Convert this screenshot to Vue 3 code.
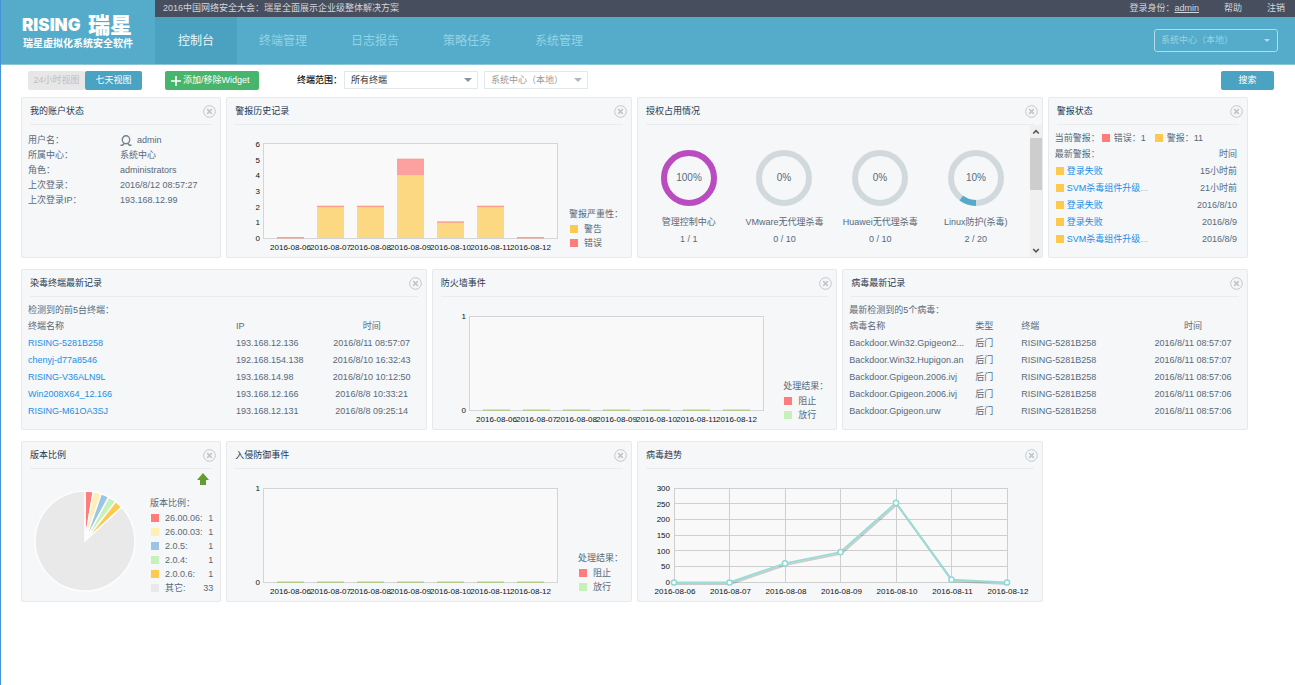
<script setup>
import { ref } from 'vue'

const tabs = ['控制台', '终端管理', '日志报告', '策略任务', '系统管理']
const activeTab = ref('控制台')

const dates = ['06', '07', '08', '09', '10', '11', '12'].map((d) => `2016-08-${d}`)

const account = [
  ['用户名：', 'admin'],
  ['所属中心：', '系统中心'],
  ['角色：', 'administrators'],
  ['上次登录：', '2016/8/12 08:57:27'],
  ['上次登录IP：', '193.168.12.99']
]

const plot = { left: 37, top: 19, width: 294, height: 94 }
const unit = plot.height / 6
const bars = [
  { warn: 0, error: 0 },
  { warn: 2, error: 0 },
  { warn: 2, error: 0 },
  { warn: 4, error: 1 },
  { warn: 1, error: 0 },
  { warn: 2, error: 0 },
  { warn: 0, error: 0 }
].map((b, i) => ({
  x: 50 + i * 40,
  warnY: 113 - b.warn * unit,
  warnH: b.warn * unit,
  errY: 113 - (b.warn + b.error) * unit,
  errH: b.error * unit
}))

const licenses = [
  { name: '管理控制中心', percent: 100, used: '1 / 1', color: '#bb4bc0' },
  { name: 'VMware无代理杀毒', percent: 0, used: '0 / 10', color: '#55aac9' },
  { name: 'Huawei无代理杀毒', percent: 0, used: '0 / 10', color: '#55aac9' },
  { name: 'Linux防护(杀毒)', percent: 10, used: '2 / 20', color: '#55aac9' }
]
const ring = 2 * Math.PI * 25

const alerts = [
  { text: '登录失败', more: false, time: '15小时前' },
  { text: 'SVM杀毒组件升级', more: true, time: '21小时前' },
  { text: '登录失败', more: false, time: '2016/8/10' },
  { text: '登录失败', more: false, time: '2016/8/9' },
  { text: 'SVM杀毒组件升级', more: true, time: '2016/8/9' }
]

const infected = [
  ['RISING-5281B258', '193.168.12.136', '2016/8/11 08:57:07'],
  ['chenyj-d77a8546', '192.168.154.138', '2016/8/10 16:32:43'],
  ['RISING-V36ALN9L', '193.168.14.98', '2016/8/10 10:12:50'],
  ['Win2008X64_12.166', '193.168.12.166', '2016/8/8 10:33:21'],
  ['RISING-M61OA3SJ', '193.168.12.131', '2016/8/8 09:25:14']
]

const viruses = [
  ['Backdoor.Win32.Gpigeon2...', '2016/8/11 08:57:07'],
  ['Backdoor.Win32.Hupigon.an', '2016/8/11 08:57:07'],
  ['Backdoor.Gpigeon.2006.ivj', '2016/8/11 08:57:06'],
  ['Backdoor.Gpigeon.2006.ivj', '2016/8/11 08:57:06'],
  ['Backdoor.Gpigeon.urw', '2016/8/11 08:57:06']
]

const versions = [
  { name: '26.00.06:', count: 1, color: '#ff7c7c' },
  { name: '26.00.03:', count: 1, color: '#ffefb5' },
  { name: '2.0.5:', count: 1, color: '#9cc4e4' },
  { name: '2.0.4:', count: 1, color: '#c5f2b8' },
  { name: '2.0.0.6:', count: 1, color: '#ffc94d' },
  { name: '其它:', count: 33, color: '#e9e9e9' }
]
const total = versions.reduce((s, v) => s + v.count, 0)
let turned = 0
const slices = versions.map((v) => {
  const a = (turned / total) * 2 * Math.PI
  turned += v.count
  const b = (turned / total) * 2 * Math.PI
  const at = (t) => `${63 + 50 * Math.sin(t)} ${72 - 50 * Math.cos(t)}`
  return { color: v.color, d: `M63 72L${at(a)}A50 50 0 ${b - a > Math.PI ? 1 : 0} 1 ${at(b)}Z` }
})

const trend = [0, 0, 61, 97, 254, 9, 0].map((v, i) => ({ x: 36 + i * 55.5, y: 113.5 - (v * 94) / 300 }))
const trendLine = trend.map((p) => `${p.x},${p.y}`).join(' ')

const panels = [
  { id: 'account', title: '我的账户状态', wide: false },
  { id: 'alarms', title: '警报历史记录', wide: true },
  { id: 'license', title: '授权占用情况', wide: true },
  { id: 'status', title: '警报状态', wide: false },
  { id: 'infected', title: '染毒终端最新记录', wide: true },
  { id: 'firewall', title: '防火墙事件', wide: true },
  { id: 'virus', title: '病毒最新记录', wide: true },
  { id: 'versions', title: '版本比例', wide: false },
  { id: 'intrusion', title: '入侵防御事件', wide: true },
  { id: 'trend', title: '病毒趋势', wide: true }
]
</script>

<template>
  <div class="page">
    <header class="header">
      <div class="brand">
        <div class="brand-name"><span class="latin">RISING</span><span class="han">瑞星</span></div>
        <div class="brand-sub">瑞星虚拟化系统安全软件</div>
      </div>
      <div class="head-main">
        <div class="topbar">
          <span class="news">2016中国网络安全大会：瑞星全面展示企业级整体解决方案</span>
          <span>登录身份：<a class="user" href="#">admin</a></span>
          <a href="#">帮助</a>
          <a href="#">注销</a>
        </div>
        <nav class="nav">
          <a v-for="t in tabs" :key="t" href="#" :class="{ active: t === activeTab }" @click.prevent="activeTab = t">{{ t }}</a>
          <span class="pick pick-head">
            <select aria-label="系统中心"><option>系统中心（本地）</option></select>
          </span>
        </nav>
      </div>
    </header>

    <div class="toolbar">
      <button class="btn muted" type="button">24小时视图</button>
      <button class="btn blue" type="button">七天视图</button>
      <button class="btn green" type="button">
        <svg width="10" height="10" viewBox="0 0 10 10"><path d="M5 0v10M0 5h10" stroke="#fff" stroke-width="1.6" /></svg>
        添加/移除Widget
      </button>
      <label class="scope-label" for="scope">终端范围：</label>
      <span class="pick pick-scope">
        <select id="scope"><option>所有终端</option></select>
      </span>
      <span class="pick pick-center">
        <select aria-label="中心"><option>系统中心（本地）</option></select>
      </span>
      <button class="btn blue search" type="button">搜索</button>
    </div>

    <main class="board">
      <section v-for="p in panels" :key="p.id" class="panel" :class="{ wide: p.wide }">
        <div class="panel-head">
          <h2>{{ p.title }}</h2>
          <button class="close" type="button" aria-label="关闭">
            <svg width="13" height="13" viewBox="0 0 13 13" fill="none" stroke="#c3c7ca">
              <circle cx="6.5" cy="6.5" r="5.8" />
              <path d="M4.2 4.2l4.6 4.6M8.8 4.2L4.2 8.8" stroke-width="1.7" />
            </svg>
          </button>
        </div>

        <dl v-if="p.id === 'account'" class="account">
          <div v-for="(row, i) in account" :key="row[0]">
            <dt>{{ row[0] }}</dt>
            <dd>
              <svg v-if="i === 0" width="12" height="12" viewBox="0 0 12 12" fill="none" stroke="#75818c" stroke-width="1.4">
                <ellipse cx="6" cy="4.8" rx="3.7" ry="4" />
                <path d="M4.300 8.200L2.600 10.300H0.500M7.700 8.200l1.700 2.100h2.100" />
              </svg>{{ row[1] }}
            </dd>
          </div>
        </dl>

        <div v-else-if="p.id === 'alarms'" class="chart-body">
          <svg class="chart" width="336" height="131" viewBox="0 0 336 131">
            <rect x="36.5" y="18.5" width="294" height="95" fill="#f9f9f9" stroke="#d3d5d6" />
            <g v-for="(b, i) in bars" :key="i">
              <rect :x="b.x" :y="b.warnY" width="27" :height="b.warnH" fill="#fdd882" />
              <rect :x="b.x" :y="b.errY" width="27" :height="b.errH" fill="#fda0a0" />
              <rect :x="b.x" :y="b.errY - 1" width="27" height="1.5" fill="#fca08c" />
              <text :x="b.x + 13.5" y="125" text-anchor="middle">{{ dates[i] }}</text>
            </g>
            <text v-for="n in 7" :key="n" x="33" :y="116 - (n - 1) * unit" text-anchor="end">{{ n - 1 }}</text>
          </svg>
          <div class="legend">
            <p>警报严重性：</p>
            <span><i class="amber"></i>警告</span>
            <span><i class="red"></i>错误</span>
          </div>
        </div>

        <div v-else-if="p.id === 'license'" class="license">
          <div class="rings">
            <figure v-for="l in licenses" :key="l.name">
              <svg width="56" height="56" viewBox="0 0 56 56" fill="none" stroke-width="6">
                <circle cx="28" cy="28" r="25" stroke="#d2d9dd" />
                <circle
                  v-if="l.percent"
                  cx="28" cy="28" r="25"
                  :stroke="l.color"
                  :stroke-dasharray="`${(ring * l.percent) / 100} ${ring}`"
                  transform="rotate(90 28 28)"
                />
                <text class="ring-text" x="28" y="31" text-anchor="middle">{{ l.percent }}%</text>
              </svg>
              <figcaption>{{ l.name }}<br />{{ l.used }}</figcaption>
            </figure>
          </div>
          <div class="scroll">
            <svg width="12" height="13" viewBox="0 0 12 13"><path d="M3.2 8.5L6 5.7l2.8 2.8" fill="none" stroke="#555" stroke-width="1.6" /></svg>
            <div class="thumb"></div>
            <svg width="12" height="13" viewBox="0 0 12 13"><path d="M3.2 5L6 7.8 8.8 5" fill="none" stroke="#555" stroke-width="1.6" /></svg>
          </div>
        </div>

        <div v-else-if="p.id === 'status'" class="list-body">
          <p class="counts">当前警报：<i class="red"></i>错误：1<i class="amber second"></i>警报：11</p>
          <table>
            <thead>
              <tr><th>最新警报：</th><th class="right">时间</th></tr>
            </thead>
            <tbody>
              <tr v-for="(a, i) in alerts" :key="i">
                <td><i class="amber"></i><a href="#">{{ a.text }}</a><span v-if="a.more" class="more">...</span></td>
                <td class="right">{{ a.time }}</td>
              </tr>
            </tbody>
          </table>
        </div>

        <div v-else-if="p.id === 'infected'" class="list-body">
          <p>检测到的前5台终端：</p>
          <table>
            <colgroup><col class="c-host" /><col /><col class="c-time" /></colgroup>
            <thead>
              <tr><th>终端名称</th><th>IP</th><th class="center">时间</th></tr>
            </thead>
            <tbody>
              <tr v-for="r in infected" :key="r[0]">
                <td><a href="#">{{ r[0] }}</a></td><td>{{ r[1] }}</td><td class="center">{{ r[2] }}</td>
              </tr>
            </tbody>
          </table>
        </div>

        <div v-else-if="p.id === 'virus'" class="list-body">
          <p>最新检测到的5个病毒：</p>
          <table>
            <colgroup><col class="c-virus" /><col class="c-type" /><col /><col class="c-time" /></colgroup>
            <thead>
              <tr><th>病毒名称</th><th>类型</th><th>终端</th><th class="center">时间</th></tr>
            </thead>
            <tbody>
              <tr v-for="(r, i) in viruses" :key="i">
                <td>{{ r[0] }}</td><td>后门</td><td>RISING-5281B258</td><td class="center">{{ r[1] }}</td>
              </tr>
            </tbody>
          </table>
        </div>

        <div v-else-if="p.id === 'versions'" class="chart-body">
          <svg class="pie" width="114" height="131" viewBox="0 0 114 131">
            <path v-for="s in slices" :key="s.color" :d="s.d" :fill="s.color" stroke="#fdfdfe" stroke-width="1.5" />
          </svg>
          <div class="versions">
            <button class="up" type="button" aria-label="升级">
              <svg width="12" height="12" viewBox="0 0 12 12"><path d="M6 0l6 7H9v5H3V7H0z" fill="#619e2f" /></svg>
            </button>
            <p>版本比例：</p>
            <span v-for="v in versions" :key="v.name">
              <svg class="swatch" width="8" height="8"><rect width="8" height="8" :fill="v.color" /></svg>{{ v.name }}<b>{{ v.count }}</b>
            </span>
          </div>
        </div>

        <div v-else-if="p.id === 'trend'" class="chart-body">
          <svg class="chart" width="400" height="131" viewBox="0 0 400 131">
            <rect x="36" y="19.5" width="333" height="94" fill="#f9f9f9" />
            <path v-for="n in 7" :key="'h' + n" :d="`M36 ${Math.round(19.5 + ((n - 1) * 94) / 6) - 0.5}h333`" stroke="#cfcfcf" />
            <path v-for="(t, i) in trend" :key="'v' + i" :d="`M${Math.floor(t.x) + 0.5} 19v94`" stroke="#cfcfcf" />
            <polyline :points="trendLine" fill="none" stroke="#000" stroke-opacity="0.18" stroke-width="2" transform="translate(1 1.5)" />
            <polyline :points="trendLine" fill="none" stroke="#9adbd6" stroke-width="2" />
            <circle v-for="(t, i) in trend" :key="'c' + i" :cx="t.x" :cy="t.y" r="2.6" fill="#fff" stroke="#8fd9d3" stroke-width="1.5" />
            <text v-for="n in 7" :key="'y' + n" x="32" :y="116 - ((n - 1) * 94) / 6" text-anchor="end">{{ (n - 1) * 50 }}</text>
            <text v-for="(t, i) in trend" :key="'x' + i" :x="t.x + 1" y="125" text-anchor="middle">{{ dates[i] }}</text>
          </svg>
        </div>

        <div v-else class="chart-body">
          <svg class="chart" width="336" height="131" viewBox="0 0 336 131">
            <rect x="36.5" y="19.5" width="294" height="94" fill="#f9f9f9" stroke="#d3d5d6" />
            <g v-for="(b, i) in bars" :key="i">
              <rect :x="b.x" y="112.5" width="27" height="1.5" fill="#b3cd8d" />
              <text :x="b.x + 13.5" y="125" text-anchor="middle">{{ dates[i] }}</text>
            </g>
            <text x="33" y="22" text-anchor="end">1</text>
            <text x="33" y="116" text-anchor="end">0</text>
          </svg>
          <div class="legend">
            <p>处理结果：</p>
            <span><i class="red"></i>阻止</span>
            <span><i class="mint"></i>放行</span>
          </div>
        </div>
      </section>
    </main>
  </div>
</template>

<style>
body {
  background: #fff;
}
</style>

<style scoped>
.page {
  box-sizing: border-box;
  min-height: 100vh;
  border-left: 1px solid #4594d8;
  font: 9px/15px "Liberation Sans", "Noto Sans CJK SC", sans-serif;
  color: #586a79;
}
.page *,
.page *::after {
  box-sizing: border-box;
}
a {
  color: #1a8fe6;
  text-decoration: none;
}
button,
select {
  margin: 0;
  padding: 0;
  border: 0;
  background: none;
  font: inherit;
  color: inherit;
}
p,
dl,
dd,
figure,
h2 {
  margin: 0;
}

.header {
  display: flex;
  background: #55acca;
  border-bottom: 1px solid #8cc6da;
}
.brand {
  width: 154px;
  padding: 14px 0 0 21px;
  color: #fff;
  font-weight: 700;
  white-space: nowrap;
}
.brand-name {
  display: flex;
  align-items: center;
  height: 22px;
}
.latin {
  width: 66px;
  font-family: Inter, "Liberation Sans", sans-serif;
  font-size: 17px;
  font-weight: 900;
}
.han {
  font-size: 22px;
  font-weight: 900;
}
.brand-sub {
  padding-left: 1px;
  font-size: 10px;
}
.head-main {
  flex: 1;
}
.topbar {
  display: flex;
  gap: 25px;
  height: 17px;
  padding: 0 10px 0 8px;
  background: #474f5f;
  color: #d3d6db;
  line-height: 17px;
}
.topbar a {
  color: inherit;
}
.topbar .user {
  text-decoration: underline;
}
.news {
  margin-right: auto;
}
.nav {
  display: flex;
  align-items: center;
  height: 47px;
  padding-right: 17px;
  font-size: 12px;
}
.nav a {
  padding: 1px 22px 0;
  line-height: 46px;
  color: #93d3e5;
}
.nav a:first-child {
  padding: 1px 23px 0;
}
.nav a.active {
  background: #4aa1c0;
  color: #e8f7fb;
}

.pick {
  position: relative;
  display: block;
}
.pick select {
  display: block;
  width: 100%;
  height: 18px;
  padding: 0 6px;
  border: 1px solid #e3e8ea;
  background: #fff;
  appearance: none;
}
.pick::after {
  content: "";
  position: absolute;
  top: 7px;
  right: 6px;
  border: 4px solid transparent;
  border-top-color: #8494a2;
  border-bottom: 0;
  pointer-events: none;
}
.pick-head {
  width: 124px;
  margin-left: auto;
  font-size: 9px;
  color: #9ad3e4;
}
.pick-head select {
  height: 23px;
  border: 1px solid #b4dbe7;
  border-radius: 3px;
  background: transparent;
}
.pick-head::after {
  top: 10px;
  right: 8px;
  border-width: 3px;
  border-bottom: 0;
  border-top-color: #b4dbe7;
}
.pick-scope {
  width: 134px;
  margin-right: 6px;
  color: #333;
}
.pick-center {
  width: 104px;
  color: #999;
}
.pick-center::after {
  border-top-color: #adbac6;
}

.toolbar {
  display: flex;
  height: 32px;
  padding: 6px 21px 0 27px;
}
.btn {
  width: 57px;
  height: 19px;
  border-radius: 2px;
  color: #fff;
  white-space: nowrap;
}
.muted {
  background: #e7e7e7;
  color: #bfbfbf;
}
.blue {
  background: #4aa3c3;
}
.green {
  display: flex;
  align-items: center;
  gap: 2px;
  width: 94px;
  margin: 0 38px 0 23px;
  padding-left: 6px;
  background: #48b56d;
}
.scope-label {
  width: 47px;
  font-weight: 500;
  line-height: 19px;
  color: #111;
  white-space: nowrap;
}
.search {
  width: 53px;
  margin-left: auto;
}

.board {
  display: grid;
  grid-template-columns: repeat(6, 1fr);
  gap: 11px 5px;
  padding: 0 47px 0 20px;
}
.panel {
  display: flex;
  flex-direction: column;
  min-width: 0;
  min-height: 161px;
  border: 1px solid #e6eaed;
  border-radius: 2px;
  background: #f5f7f9;
}
.wide {
  grid-column: span 2;
}
.panel-head {
  display: flex;
  align-items: center;
  justify-content: space-between;
  height: 27px;
  margin: 0 8px;
  border-bottom: 1px solid #e9ebed;
}
.panel-head h2 {
  font-size: 9px;
  font-weight: 400;
  color: #1f3a52;
}
.close {
  margin-right: -4px;
  height: 13px;
}
svg {
  display: block;
}

.account {
  padding: 8px 6px 0;
}
.account div {
  display: flex;
}
.account dt {
  width: 92px;
}
.account dd {
  display: flex;
  align-items: center;
  gap: 5px;
}

.chart-body {
  display: flex;
  flex: 1;
}
.chart {
  flex: none;
}
.chart text {
  font-size: 8px;
  fill: #111;
}
i {
  display: inline-block;
  width: 8px;
  height: 8px;
}
.red {
  background: #ff7c7c;
}
.amber {
  background: #ffc94d;
}
.mint {
  background: #c5f2b8;
}
.legend {
  display: flex;
  flex-direction: column;
  justify-content: flex-end;
  margin-left: auto;
  padding: 0 8px 7px 0;
  line-height: 16px;
  white-space: nowrap;
}
.legend span {
  display: flex;
  align-items: center;
  gap: 6px;
  padding-left: 1px;
  line-height: 14px;
}

.license {
  display: flex;
  flex: 1;
}
.rings {
  display: flex;
  flex: 1;
  padding: 25px 6px 0 3px;
}
.rings figure {
  display: flex;
  flex: 1 1 0;
  flex-direction: column;
  align-items: center;
  gap: 8px;
  min-width: 0;
}
.ring-text {
  font-size: 10px;
  stroke: none;
  fill: #586a79;
}
figcaption {
  line-height: 17px;
  text-align: center;
  white-space: nowrap;
}
.scroll {
  display: flex;
  flex-direction: column;
  width: 12px;
  background: #f0f0f0;
}
.thumb {
  height: 52px;
  margin-bottom: auto;
  background: #cdcdcd;
}

.list-body {
  padding: 5px 6px 0;
}
.list-body p {
  line-height: 16px;
}
.counts i {
  margin: 0 4px 0 2px;
  vertical-align: -1px;
}
.counts .second {
  margin-left: 9px;
}
table {
  width: 100%;
  table-layout: fixed;
  border-collapse: collapse;
  white-space: nowrap;
}
th,
td {
  height: 17px;
  padding: 0;
  font-weight: 400;
  line-height: 16px;
  text-align: left;
}
th {
  height: 16px;
}
td i {
  margin: 0 3px 0 1px;
  vertical-align: -1px;
}
.right {
  padding-right: 4px;
  text-align: right;
}
.center {
  text-align: center;
}
.more {
  color: #aab3ba;
}
.c-host {
  width: 208px;
}
.c-time {
  width: 96px;
}
.c-virus {
  width: 126px;
}
.c-type {
  width: 46px;
}

.pie {
  flex: none;
}
.versions {
  display: flex;
  flex: 1;
  flex-direction: column;
  padding: 4px 7px 0 14px;
  white-space: nowrap;
}
.up {
  align-self: flex-end;
  height: 12px;
  margin: 0 4px 10px 0;
}
.versions p {
  line-height: 16px;
}
.versions span {
  display: flex;
  align-items: center;
  padding-left: 1px;
  line-height: 14px;
}
.swatch {
  margin-right: 6px;
}
.versions b {
  margin-left: auto;
  font-weight: 400;
}
</style>
